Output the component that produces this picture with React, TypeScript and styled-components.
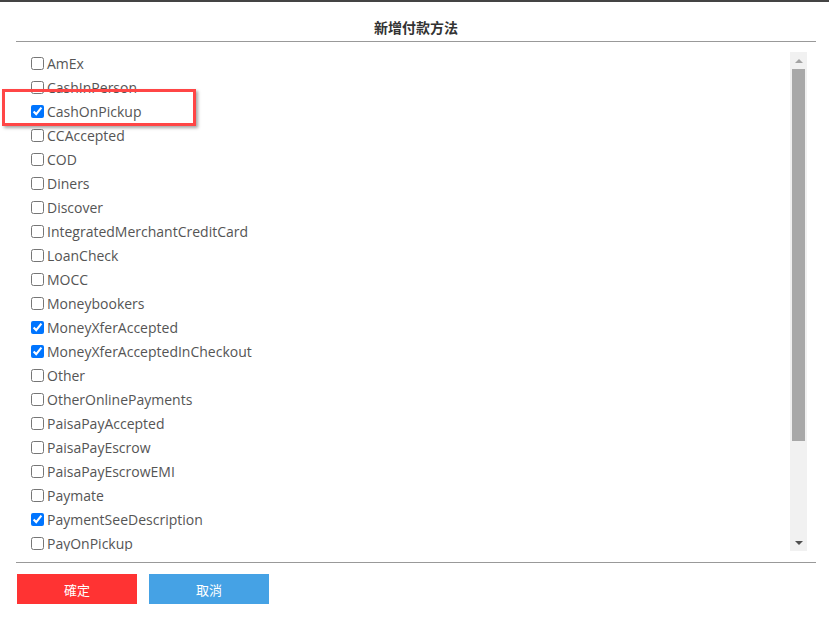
import React, { useState } from "react";
import styled, { createGlobalStyle } from "styled-components";

const Global = createGlobalStyle`
  html, body { margin: 0; padding: 0; background: #fff; }
  body { font-family: "Open Sans", "Noto Sans CJK TC", sans-serif; }
  * { box-sizing: border-box; }
`;

const Page = styled.div`
  width: 829px;
  height: 617px;
  border-top: 2px solid #444;
  position: relative;
`;

const Dialog = styled.div`
  width: 800px;
  margin-left: 16px;
  display: flex;
  flex-direction: column;
`;

const Title = styled.div`
  padding: 14px 0 3px;
  line-height: 22px;
  text-align: center;
  font-family: "Noto Sans CJK TC", "Noto Sans CJK SC", sans-serif;
  font-weight: bold;
  font-size: 14px;
  color: #333;
  border-bottom: 1px solid #999;
`;

const ListWrap = styled.div`
  margin: 9px 9px 11px 0;
  height: 500px;
  display: flex;
`;

const List = styled.div`
  flex: 1;
  overflow-y: scroll;
  scrollbar-width: none;
  &::-webkit-scrollbar { display: none; }
`;

const Track = styled.div`
  width: 17px;
  margin-top: 1px;
  background: #f1f1f1;
  display: flex;
  flex-direction: column;
  align-items: center;
`;

const ArrowBtn = styled.div<{ $dir: "up" | "down" }>`
  height: 17px;
  width: 17px;
  display: flex;
  align-items: center;
  justify-content: center;
  &::after {
    content: "";
    width: 0;
    height: 0;
    border-left: 4px solid transparent;
    border-right: 4px solid transparent;
    ${(p) =>
      p.$dir === "up"
        ? "border-bottom: 4px solid #a3a3a3;"
        : "border-top: 4px solid #505050;"}
  }
`;

const ThumbArea = styled.div`
  flex: 1;
  width: 100%;
  padding: 0 2px;
`;

const Thumb = styled.div`
  width: 100%;
  background: #a8a8a8;
`;

const Row = styled.label`
  display: flex;
  align-items: center;
  height: 24px;
  padding-left: 11px;
  font-size: 14px;
  color: #555;
  cursor: pointer;
  input { margin: 0 3px 0 4px; width: 13px; height: 13px; }
`;

const Footer = styled.div`
  border-top: 1px solid #999;
  padding: 11px 0 0 1px;
  display: flex;
  gap: 12px;
`;

const Btn = styled.button<{ $tone: "ok" | "cancel" }>`
  width: 120px;
  height: 30px;
  border: none;
  color: #fff;
  font-size: 13px;
  font-family: "Noto Sans CJK TC", sans-serif;
  background: ${(p) => (p.$tone === "ok" ? "#ff3333" : "#45a2e5")};
  cursor: pointer;
`;

const Highlight = styled.div`
  position: absolute;
  left: 2px;
  top: 87px;
  width: 194px;
  height: 37px;
  border: 3px solid #ff4646;
  box-shadow: 2px 2px 3px rgba(0, 0, 0, 0.35);
  pointer-events: none;
`;

const items: [string, boolean][] = [
  ["AmEx", false],
  ["CashInPerson", false],
  ["CashOnPickup", true],
  ["CCAccepted", false],
  ["COD", false],
  ["Diners", false],
  ["Discover", false],
  ["IntegratedMerchantCreditCard", false],
  ["LoanCheck", false],
  ["MOCC", false],
  ["Moneybookers", false],
  ["MoneyXferAccepted", true],
  ["MoneyXferAcceptedInCheckout", true],
  ["Other", false],
  ["OtherOnlinePayments", false],
  ["PaisaPayAccepted", false],
  ["PaisaPayEscrow", false],
  ["PaisaPayEscrowEMI", false],
  ["Paymate", false],
  ["PaymentSeeDescription", true],
  ["PayOnPickup", false],
  ["PayPal", false],
  ["PayPalCredit", false],
  ["PayUponInvoice", false],
  ["PersonalCheck", false],
  ["VisaMC", false],
];

const thumbRatio = 0.8;

export default function App() {
  const [checked, setChecked] = useState<boolean[]>(items.map((i) => i[1]));
  return (
    <Page>
      <Global />
      <Dialog>
        <Title>新增付款方法</Title>
        <ListWrap>
          <List>
            {items.map(([name], i) => (
              <Row key={name}>
                <input
                  type="checkbox"
                  checked={checked[i]}
                  onChange={() =>
                    setChecked((c) => c.map((v, j) => (j === i ? !v : v)))
                  }
                />
                {name}
              </Row>
            ))}
          </List>
          <Track>
            <ArrowBtn $dir="up" />
            <ThumbArea>
              <Thumb style={{ height: `${thumbRatio * 100}%` }} />
            </ThumbArea>
            <ArrowBtn $dir="down" />
          </Track>
        </ListWrap>
        <Footer>
          <Btn $tone="ok">確定</Btn>
          <Btn $tone="cancel">取消</Btn>
        </Footer>
      </Dialog>
      <Highlight />
    </Page>
  );
}
